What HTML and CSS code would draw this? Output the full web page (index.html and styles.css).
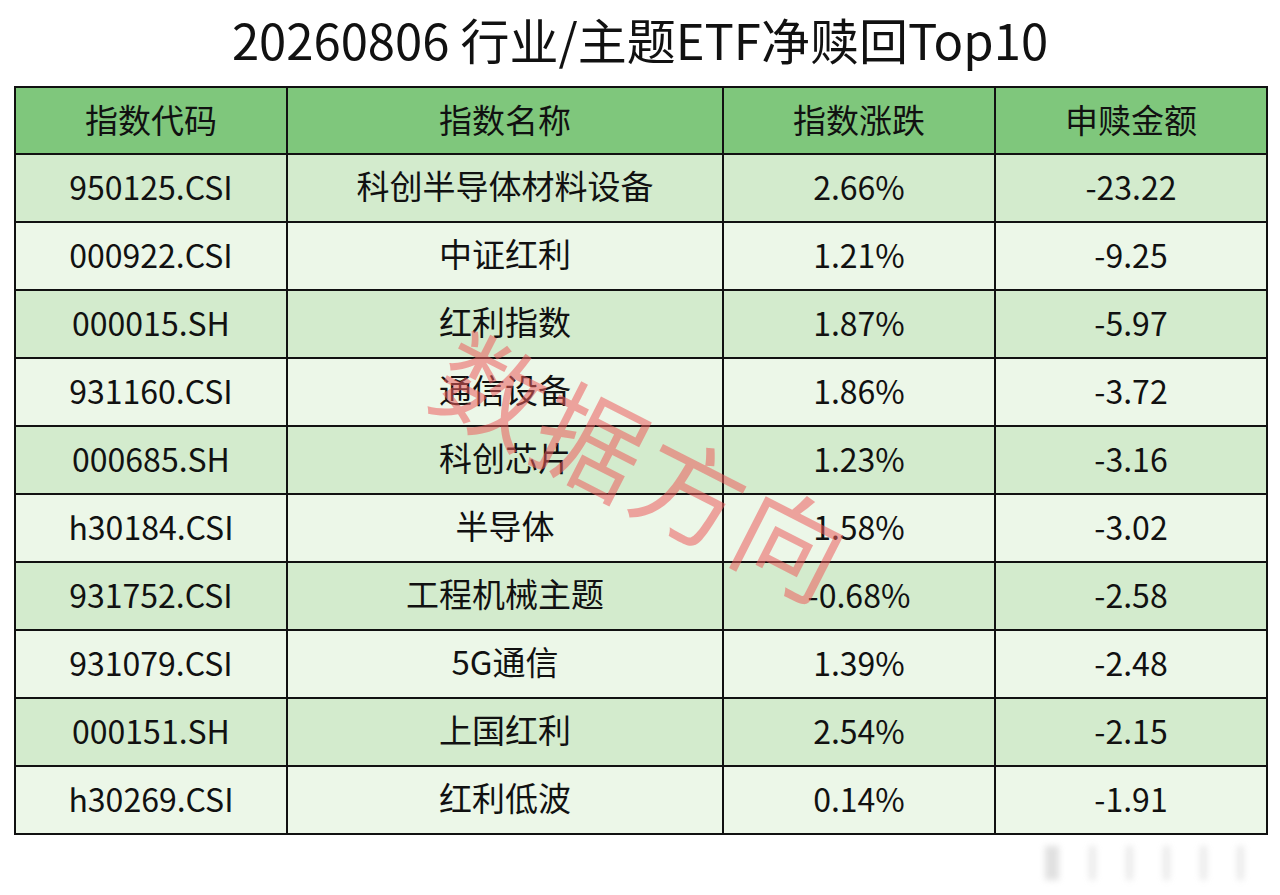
FILE: index.html
```html
<!DOCTYPE html>
<html lang="zh-CN">
<head>
<meta charset="utf-8">
<title>20260806 行业/主题ETF净赎回Top10</title>
<link rel="stylesheet" href="styles.css">
</head>
<body>
<div class="page">
  <h1 class="title">20260806 行业/主题ETF净赎回Top10</h1>
  <div class="table-wrap">
    <table class="etf">
      <colgroup>
        <col class="c1"><col class="c2"><col class="c3"><col class="c4">
      </colgroup>
      <thead>
        <tr><th>指数代码</th><th>指数名称</th><th>指数涨跌</th><th>申赎金额</th></tr>
      </thead>
      <tbody>
        <tr><td>950125.CSI</td><td>科创半导体材料设备</td><td>2.66%</td><td>-23.22</td></tr>
        <tr><td>000922.CSI</td><td>中证红利</td><td>1.21%</td><td>-9.25</td></tr>
        <tr><td>000015.SH</td><td>红利指数</td><td>1.87%</td><td>-5.97</td></tr>
        <tr><td>931160.CSI</td><td>通信设备</td><td>1.86%</td><td>-3.72</td></tr>
        <tr><td>000685.SH</td><td>科创芯片</td><td>1.23%</td><td>-3.16</td></tr>
        <tr><td>h30184.CSI</td><td>半导体</td><td>1.58%</td><td>-3.02</td></tr>
        <tr><td>931752.CSI</td><td>工程机械主题</td><td>-0.68%</td><td>-2.58</td></tr>
        <tr><td>931079.CSI</td><td>5G通信</td><td>1.39%</td><td>-2.48</td></tr>
        <tr><td>000151.SH</td><td>上国红利</td><td>2.54%</td><td>-2.15</td></tr>
        <tr><td>h30269.CSI</td><td>红利低波</td><td>0.14%</td><td>-1.91</td></tr>
      </tbody>
    </table>
    <div class="watermark">数据方向</div>
  </div>
  <div class="ghost"><span class="g1"></span><span></span><span></span><span></span><span></span><span></span></div>
</div>
</body>
</html>
```
FILE: styles.css
```css
html, body {
  margin: 0;
  padding: 0;
  background: #ffffff;
}
body {
  font-family: "Noto Sans CJK SC", "Noto Sans", sans-serif;
  color: #111;
}
.page {
  position: relative;
  width: 1280px;
  height: 895px;
  overflow: hidden;
}
.title {
  margin: 0;
  height: 86px;
  line-height: 78px;
  text-align: center;
  font-size: 49px;
  font-weight: 400;
  color: #111;
}
.table-wrap {
  position: relative;
  margin-left: 14px;
  width: 1252px;
}
.etf {
  border-collapse: collapse;
  width: 1252px;
  table-layout: fixed;
  border: 2px solid #111;
}
.c1 { width: 272px; }
.c2 { width: 436px; }
.c3 { width: 272px; }
.c4 { width: 272px; }
.etf th, .etf td {
  border: 2px solid #111;
  text-align: center;
  font-weight: 400;
  font-size: 32px;
  height: 61px;
  padding: 0 0 5px 0;
  line-height: 1;
}
.etf th {
  background: #7fc77c;
  height: 62px;
  padding: 0 0 3px 0;
  font-size: 33px;
}
.etf tbody tr:nth-child(odd) td {
  background: #d3ebcd;
}
.etf tbody tr:nth-child(even) td {
  background: #ecf7e8;
}
.etf tbody tr td:nth-child(2) {
  font-size: 33px;
}
.watermark {
  position: absolute;
  left: 456px;
  top: 227px;
  font-size: 108px;
  line-height: 1;
  color: rgba(236, 92, 92, 0.55);
  transform: rotate(27deg);
  transform-origin: left top;
  white-space: nowrap;
  pointer-events: none;
  letter-spacing: 4px;
}
.ghost {
  position: absolute;
  left: 1045px;
  top: 846px;
  display: flex;
  gap: 30px;
  filter: blur(3px);
  opacity: 0.35;
}
.ghost span {
  width: 7px;
  height: 34px;
  background: #c4c4c4;
}
.ghost .g1 {
  width: 14px;
  background: #a8a8a8;
}
```
